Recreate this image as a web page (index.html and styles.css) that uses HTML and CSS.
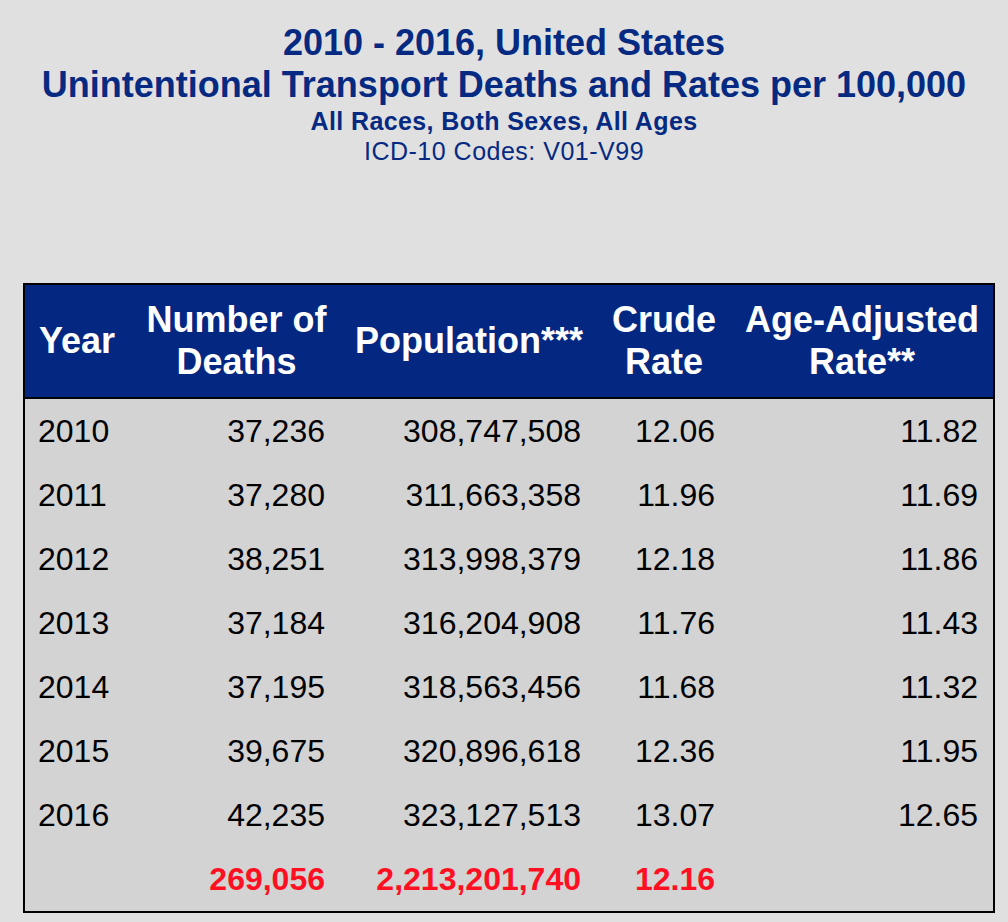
FILE: index.html
```html
<!DOCTYPE html>
<html lang="en">
<head>
<meta charset="utf-8">
<title>Unintentional Transport Deaths and Rates</title>
<link rel="stylesheet" href="styles.css">
</head>
<body>
<div class="page">
  <header class="titles">
    <div class="t1">2010 - 2016, United States</div>
    <div class="t2">Unintentional Transport Deaths and Rates per 100,000</div>
    <div class="t3">All Races, Both Sexes, All Ages</div>
    <div class="t4">ICD-10 Codes: V01-V99</div>
  </header>
  <table class="data">
    <colgroup>
      <col class="c-year">
      <col class="c-deaths">
      <col class="c-pop">
      <col class="c-crude">
      <col class="c-age">
    </colgroup>
    <thead>
      <tr>
        <th class="year">Year</th>
        <th>Number of<br>Deaths</th>
        <th>Population***</th>
        <th>Crude<br>Rate</th>
        <th>Age-Adjusted<br>Rate**</th>
      </tr>
    </thead>
    <tbody>
      <tr><td class="year">2010</td><td>37,236</td><td>308,747,508</td><td>12.06</td><td>11.82</td></tr>
      <tr><td class="year">2011</td><td>37,280</td><td>311,663,358</td><td>11.96</td><td>11.69</td></tr>
      <tr><td class="year">2012</td><td>38,251</td><td>313,998,379</td><td>12.18</td><td>11.86</td></tr>
      <tr><td class="year">2013</td><td>37,184</td><td>316,204,908</td><td>11.76</td><td>11.43</td></tr>
      <tr><td class="year">2014</td><td>37,195</td><td>318,563,456</td><td>11.68</td><td>11.32</td></tr>
      <tr><td class="year">2015</td><td>39,675</td><td>320,896,618</td><td>12.36</td><td>11.95</td></tr>
      <tr><td class="year">2016</td><td>42,235</td><td>323,127,513</td><td>13.07</td><td>12.65</td></tr>
      <tr class="total"><td class="year"></td><td>269,056</td><td>2,213,201,740</td><td>12.16</td><td></td></tr>
    </tbody>
  </table>
</div>
</body>
</html>
```

FILE: styles.css
```css
html, body {
  margin: 0;
  padding: 0;
}
body {
  background: #e0e0e0;
  font-family: "Liberation Sans", Arial, sans-serif;
  color: #000;
}
.page {
  padding: 22px 0 0 23px;
  width: 972px;
}
.titles {
  text-align: center;
  color: #062a82;
  width: 962px;
}
.t1, .t2 {
  font-size: 36px;
  line-height: 42px;
  font-weight: bold;
}
.t3 {
  font-size: 25px;
  line-height: 31px;
  font-weight: bold;
  letter-spacing: 0.4px;
}
.t4 {
  font-size: 25px;
  line-height: 28px;
  letter-spacing: 0.5px;
}
.data {
  margin-top: 118px;
  border: 2px solid #000;
  border-collapse: separate;
  border-spacing: 0;
  table-layout: fixed;
  width: 972px;
  background: #d3d3d3;
}
.c-year { width: 107px; }
.c-deaths { width: 209px; }
.c-pop { width: 256px; }
.c-crude { width: 134px; }
.c-age { width: 262px; }
.data th {
  background: #042882;
  color: #fff;
  font-size: 36px;
  line-height: 42px;
  font-weight: bold;
  height: 112px;
  padding: 0 14px;
  text-align: center;
  vertical-align: middle;
  border-bottom: 2px solid #000;
  white-space: nowrap;
}
.data th.year {
  padding: 0 8px 0 14px;
  text-align: left;
}
.data td {
  font-size: 32px;
  line-height: 64px;
  height: 64px;
  padding: 0 16px 0 0;
  text-align: right;
  white-space: nowrap;
}
.data td:last-child {
  padding-right: 15px;
}
.data td.year {
  text-align: left;
  padding: 0 0 0 13px;
}
.total td {
  color: #ff0f22;
  font-weight: bold;
}
```
